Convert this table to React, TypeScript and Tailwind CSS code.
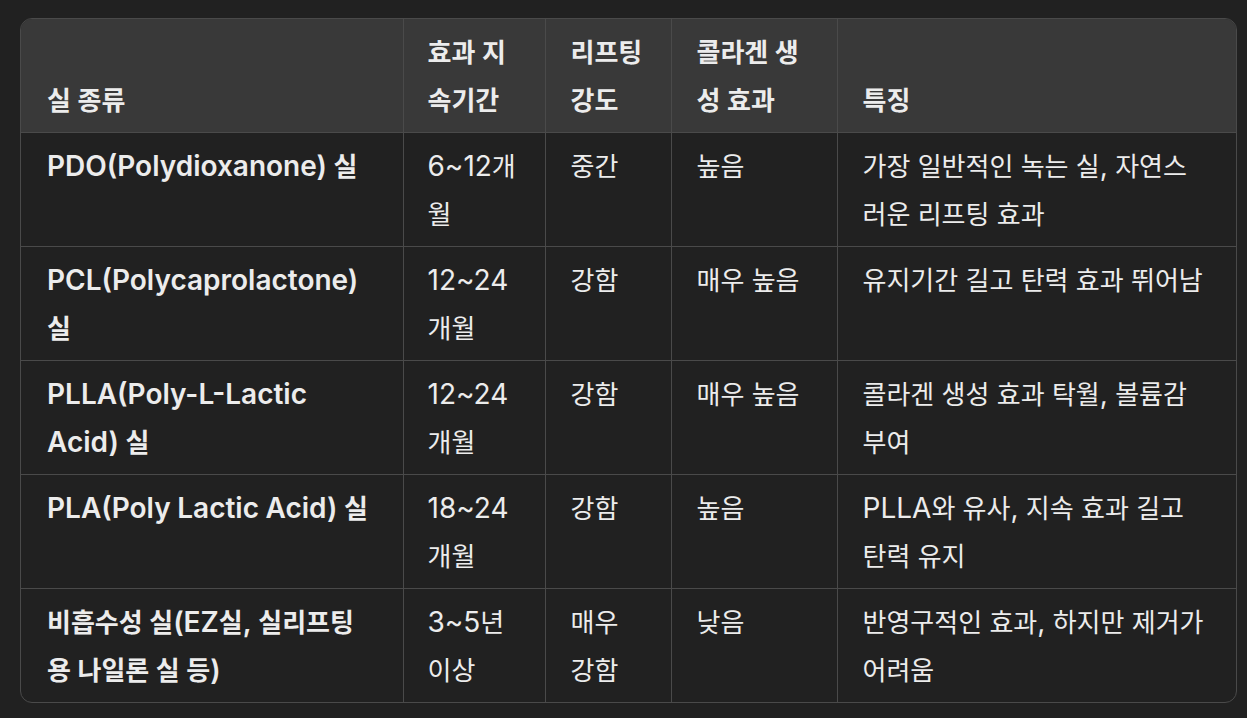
const COLS = ['w-[382px]', 'w-[142px]', 'w-[126px]', 'w-[166px]', 'w-[399px]'];

// cell padding per column, tuned so the text wraps as in the source
const PAD = [
  'pl-[26px] pr-[30px]',
  'pl-[24px] pr-[22px]',
  'pl-[25px] pr-[24px]',
  'pl-[25px] pr-[24px]',
  'pl-[25px] pr-[32px]',
];

const HEAD = ['실 종류', '효과 지속기간', '리프팅 강도', '콜라겐 생성 효과', '특징'];

const ROWS: string[][] = [
  ['PDO(Polydioxanone) 실', '6~12개월', '중간', '높음', '가장 일반적인 녹는 실, 자연스러운 리프팅 효과'],
  ['PCL(Polycaprolactone) 실', '12~24개월', '강함', '매우 높음', '유지기간 길고 탄력 효과 뛰어남'],
  ['PLLA(Poly-L-Lactic Acid) 실', '12~24개월', '강함', '매우 높음', '콜라겐 생성 효과 탁월, 볼륨감 부여'],
  ['PLA(Poly Lactic Acid) 실', '18~24개월', '강함', '높음', 'PLLA와 유사, 지속 효과 길고 탄력 유지'],
  ['비흡수성 실(EZ실, 실리프팅용 나일론 실 등)', '3~5년 이상', '매우 강함', '낮음', '반영구적인 효과, 하지만 제거가 어려움'],
];

// Hangul words (and spaces) are set a little smaller than the latin text
function Txt({ s }: { s: string }) {
  return (
    <>
      {s.split(/([\uAC00-\uD7A3]+|\s+)/).map((p, i) =>
        /[\uAC00-\uD7A3\s]/.test(p) ? (
          <span key={i} className="text-[26px] leading-none">
            {p}
          </span>
        ) : (
          p
        )
      )}
    </>
  );
}

export default function App() {
  return (
    <div
      className="min-h-[718px] w-[1247px] bg-[#212121] pt-[18px] pl-[20px] text-[#ececec]"
      style={{ fontFamily: 'Inter, "Noto Sans CJK KR", sans-serif' }}
    >
      <div className="w-[1217px] overflow-hidden rounded-[12px] border border-[#4a4a4a]">
        <table className="w-full table-fixed border-collapse text-[28px] leading-[48px]">
          <colgroup>
            {COLS.map((c, i) => (
              <col key={i} className={c} />
            ))}
          </colgroup>
          <thead>
            <tr className="bg-[#393939]">
              {HEAD.map((h, i) => (
                <th
                  key={h}
                  className={`border-[#4a4a4a] pt-[9px] pb-[8px] text-left align-bottom font-semibold ${PAD[i]} ${i > 0 ? 'border-l' : ''}`}
                >
                  <Txt s={h} />
                </th>
              ))}
            </tr>
          </thead>
          <tbody>
            {ROWS.map((row) => (
              <tr key={row[0]} className="border-t border-[#4a4a4a]">
                {row.map((cell, i) => (
                  <td
                    key={i}
                    className={`border-[#4a4a4a] pt-[9px] pb-[8px] align-top ${PAD[i]} ${i > 0 ? 'border-l' : 'font-semibold'}`}
                  >
                    <Txt s={cell} />
                  </td>
                ))}
              </tr>
            ))}
          </tbody>
        </table>
      </div>
    </div>
  );
}
